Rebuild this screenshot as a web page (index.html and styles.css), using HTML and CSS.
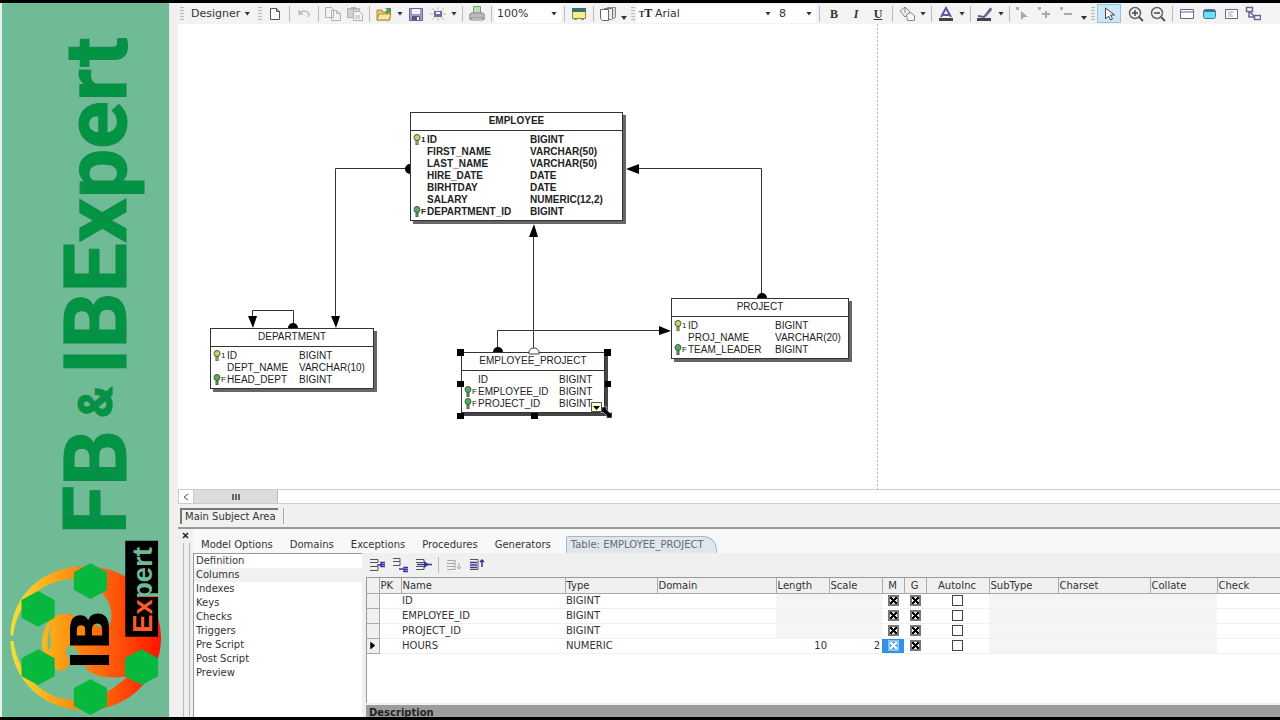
FILE: index.html
```html
<!DOCTYPE html>
<html lang="en">
<head>
<meta charset="utf-8">
<title>FB &amp; IBExpert</title>
<link rel="stylesheet" href="styles.css">
</head>
<body>
<div class="page">
<aside class="brand">
  <h1 class="brand-title">FB<span class="amp"> &amp; </span>IBExpert</h1>
  <svg class="logo" viewBox="6 20 504 541">
    <defs>
      <linearGradient id="flame" gradientUnits="userSpaceOnUse" x1="30" y1="0" x2="486" y2="0">
        <stop offset="0" stop-color="#f2e03a"/><stop offset=".3" stop-color="#fca516"/><stop offset=".6" stop-color="#ff6a0c"/><stop offset="1" stop-color="#ff1402"/>
      </linearGradient>
      <linearGradient id="word" gradientUnits="userSpaceOnUse" x1="0" y1="0" x2="260" y2="0">
        <stop offset=".43" stop-color="#ff5a2c"/><stop offset=".43" stop-color="#6fbb95"/>
      </linearGradient>
    </defs>
    <path fill="url(#flame)" d="M31 314C36 190 130 105 258 105C390 105 486 205 486 322C486 440 390 540 258 540C130 540 36 450 31 331L41 331C52 430 130 510 235 510C300 508 350 470 385 438C330 445 275 440 258 410C245 392 240 365 222 348C208 340 196 352 200 370C206 382 215 392 206 406C195 424 176 424 166 412C150 395 130 375 126 345C126 310 138 275 158 262C185 240 215 250 245 262C280 280 310 296 328 286C345 262 336 205 300 180C270 150 240 143 215 143C130 150 52 210 40 314Z"/>
    <path fill="#6fbb95" d="M160 272C148 295 142 325 144 350L150 362C156 345 152 328 151 310C152 295 156 285 160 272Z"/>
    <g fill="#07b83e">
      <path d="M273 96l50 27v54l-50 27-50-27v-54z"/>
      <path d="M115 180l50 27v54l-50 27-50-27v-54z"/>
      <path d="M115 356l50 27v54l-50 27-50-27v-54z"/>
      <path d="M273 446l50 27v54l-50 27-50-27v-54z"/>
      <path d="M427 356l50 27v54l-50 27-50-27v-54z"/>
    </g>
    <path d="M378 28h99v290h-99z"/>
    <text class="logo-ib" transform="translate(328 418) rotate(-90)">IB</text>
    <text class="logo-expert" fill="url(#word)" transform="translate(460 306) rotate(-90)">Expert</text>
  </svg>
</aside>

<main class="app">
<div class="toolbar">
  <i class="grip"></i>
  <button class="menu">Designer<i class="tri"></i></button>
  <i class="grip"></i>
  <button class="tb" aria-label="New"><svg viewBox="0 0 16 16"><path d="M3.500 2.500h6l3 3v8h-9zM9.500 2.500v3h3" fill="#fff" stroke="#555"/></svg></button>
  <i class="sep"></i>
  <button class="tb faint" aria-label="Undo"><svg viewBox="0 0 16 16"><path d="M3 4v4h4M3 8c3-4 9-4 10 1l-1 2" fill="none" stroke="#999" stroke-width="1.500"/></svg></button>
  <i class="sep"></i>
  <button class="tb faint" aria-label="Copy"><svg viewBox="0 0 16 16"><path d="M.500 1.500h6l2 2v8h-8zM6.500 4.500h5l4 3v7h-9zM11.500 4.500v3h4" fill="#f4f4f4" stroke="#888"/></svg></button>
  <button class="tb faint" aria-label="Paste"><svg viewBox="0 0 16 16"><path d="M.500 2.500h12v9h-12z" fill="#bbb" stroke="#888"/><path d="M4 1h5v3H4z" fill="#888"/><path d="M6.500 5.500h6l3 3v6h-9zM8 10h5M8 12h5" fill="#f4f4f4" stroke="#888"/></svg></button>
  <i class="sep"></i>
  <button class="tb" aria-label="Open"><svg viewBox="0 0 16 16"><path d="M1 14V4h5l1 2h7v8z" fill="#e6c766" stroke="#a98f45"/><path d="M3 8h12l-2 6H1z" fill="#f8e79a" stroke="#a98f45"/><path d="M9 2h6v6l-2-2-2 2-2-2 2-2z" fill="#5a9a50"/></svg></button>
  <button class="drop" aria-label="Open recent"><i class="tri"></i></button>
  <button class="tb" aria-label="Save"><svg viewBox="0 0 16 16"><path d="M1.500 2.500h13v12h-13z" fill="#9b9bd0" stroke="#6767a0"/><path d="M4 3h8v5H4z" fill="#f4f4fb"/><path d="M4 10h8v4H4z" fill="#4f5a78"/><path d="M9 11h2v3H9z" fill="#fff"/></svg></button>
  <button class="tb" aria-label="Export"><svg viewBox="0 0 16 16"><path d="M2 2l3 3M14 2l-3 3M2 14l3-3M14 14l-3-3M8 1v3M8 12v3M0 8h3M13 8h3" stroke="#dcb48a"/><path d="M4 5h8v6H4z" fill="#6d6da8"/><path d="M6 6h4v2H6z" fill="#fff"/></svg></button>
  <button class="drop" aria-label="Export options"><i class="tri"></i></button>
  <i class="sep"></i>
  <button class="tb" aria-label="Print"><svg viewBox="0 0 16 16"><path d="M4.500 .500h7v7h-7z" fill="#b7e0b5" stroke="#789a78"/><path d="M2 7h12l2 3v3H0v-3z" fill="#b9bdb9" stroke="#888"/><path d="M2 12h12v2H2z" fill="#eee" stroke="#888"/></svg></button>
  <i class="sep"></i>
  <span class="pick pick-zoom"><select aria-label="Zoom"><option>100%</option></select><i class="tri"></i></span>
  <i class="sep"></i>
  <button class="tb" aria-label="Table view"><svg viewBox="0 0 16 16"><path d="M1.500 2.500h13v10h-13z" fill="#f6ef8a" stroke="#8b8652"/><path d="M1 2h14v4H1z" fill="#35726f"/><path d="M3 13h3M10 13h3" stroke="#9a8f40" stroke-width="2"/></svg></button>
  <i class="sep"></i>
  <button class="tb" aria-label="Pages"><svg viewBox="0 0 16 16"><path d="M7.500 1.500h8v10l-2 1h-6z" fill="#ddd" stroke="#888"/><path d="M4.500 2.500h8v10l-1 1h-7z" fill="#eee" stroke="#777"/><path d="M.500 3.500h8v11h-6l-2-2z" fill="#fff" stroke="#666"/></svg></button>
  <button class="drop low" aria-label="More"><i class="tri"></i></button>
  <i class="grip"></i>
  <span class="pick pick-font"><b class="tt"><small>T</small>T</b><select aria-label="Font"><option>Arial</option></select><i class="tri"></i></span>
  <span class="pick pick-size"><select aria-label="Font size"><option>8</option></select><i class="tri"></i></span>
  <i class="sep"></i>
  <button class="tb letter">B</button>
  <button class="tb letter italic">I</button>
  <button class="tb letter under">U</button>
  <i class="sep"></i>
  <button class="tb" aria-label="Fill colour"><svg viewBox="0 0 16 16"><path d="M1 5l5-4 5 5-5 5zM6 1v6" fill="#eee" stroke="#888"/><path d="M7.500 8.500l4-2 4 3v5h-7z" fill="#f8f8f8" stroke="#888"/></svg></button>
  <button class="drop" aria-label="Fill options"><i class="tri"></i></button>
  <i class="sep"></i>
  <button class="tb" aria-label="Text colour"><svg viewBox="0 0 16 16"><path d="M3 11L8 2l5 9M5 9h6" fill="none" stroke="#5b5b9c" stroke-width="2"/><path d="M1 12h14v3H1z" fill="#444"/></svg></button>
  <button class="drop" aria-label="Text colour options"><i class="tri"></i></button>
  <i class="sep"></i>
  <button class="tb" aria-label="Line colour"><svg viewBox="0 0 16 16"><path d="M1 10l6 1 7-9" fill="none" stroke="#5b5b9c" stroke-width="2"/><path d="M8 9l6-7 1 2-6 7z" fill="#6d7087"/><path d="M0 12h14v3H0z" fill="#444"/></svg></button>
  <button class="drop" aria-label="Line colour options"><i class="tri"></i></button>
  <i class="sep"></i>
  <button class="tb faint" aria-label="Select point"><svg viewBox="0 0 16 16"><path d="M0 1h3v3H0z" fill="#888"/><path d="M5 5v9l3-3h4z" fill="#777"/></svg></button>
  <button class="tb faint" aria-label="Add point"><svg viewBox="0 0 16 16"><path d="M0 1h3v3H0z" fill="#888"/><path d="M8 5v7M4 8h8" stroke="#777" stroke-width="2"/></svg></button>
  <button class="tb faint" aria-label="Remove point"><svg viewBox="0 0 16 16"><path d="M0 1h3v3H0z" fill="#888"/><path d="M4 8h8" stroke="#777" stroke-width="2"/></svg></button>
  <button class="drop low" aria-label="More"><i class="tri"></i></button>
  <i class="grip"></i>
  <button class="tb on" aria-label="Pointer"><svg viewBox="0 0 16 16"><path d="M4.500 2v11l3-3 2 4 2-1-2-4h4z" fill="#fff" stroke="#444"/></svg></button>
  <button class="tb" aria-label="Zoom in"><svg viewBox="0 0 16 16"><circle cx="7" cy="7" r="5.500" fill="#f2f2f2" stroke="#666" stroke-width="1.500"/><path d="M11 11l4 4" stroke="#555" stroke-width="2"/><path d="M4 7h6M7 4v6" stroke="#444" stroke-width="1.500"/></svg></button>
  <button class="tb" aria-label="Zoom out"><svg viewBox="0 0 16 16"><circle cx="7" cy="7" r="5.500" fill="#f2f2f2" stroke="#666" stroke-width="1.500"/><path d="M11 11l4 4" stroke="#555" stroke-width="2"/><path d="M4 7h6" stroke="#444" stroke-width="1.500"/></svg></button>
  <i class="sep"></i>
  <button class="tb" aria-label="Entity"><svg viewBox="0 0 16 16"><path d="M1.500 3.500h13v9h-13zM1 6h13" fill="#fff" stroke="#66669c"/></svg></button>
  <button class="tb" aria-label="View"><svg viewBox="0 0 16 16"><rect x="2.500" y="3.500" width="12" height="9" rx="2" fill="#63e6f2" stroke="#4e6aa0"/><path d="M3 5h11" stroke="#4e6aa0" stroke-width="2"/></svg></button>
  <button class="tb" aria-label="Comment"><svg viewBox="0 0 16 16"><path d="M2.500 3.500h12v9h-12z" fill="#fff" stroke="#66669c"/><path d="M5 6h6M5 8h4M5 10h5" stroke="#aaa"/></svg></button>
  <button class="tb" aria-label="Relation"><svg viewBox="0 0 16 16"><path d="M1.500 1.500h6v4h-6zM9.500 9.500h6v4h-6zM4 6v5h5M5 6l4 4" fill="#fff" stroke="#66669c" stroke-width="1.500"/></svg></button>
</div>

<section class="canvas">
  <article class="entity employee">
    <h2>EMPLOYEE</h2>
    <table>
      <tr><td class="key gold">1</td><td>ID</td><td>BIGINT</td></tr>
      <tr><td></td><td>FIRST_NAME</td><td>VARCHAR(50)</td></tr>
      <tr><td></td><td>LAST_NAME</td><td>VARCHAR(50)</td></tr>
      <tr><td></td><td>HIRE_DATE</td><td>DATE</td></tr>
      <tr><td></td><td>BIRHTDAY</td><td>DATE</td></tr>
      <tr><td></td><td>SALARY</td><td>NUMERIC(12,2)</td></tr>
      <tr><td class="key">F</td><td>DEPARTMENT_ID</td><td>BIGINT</td></tr>
    </table>
  </article>
  <article class="entity department">
    <h2>DEPARTMENT</h2>
    <table>
      <tr><td class="key gold">1</td><td>ID</td><td>BIGINT</td></tr>
      <tr><td></td><td>DEPT_NAME</td><td>VARCHAR(10)</td></tr>
      <tr><td class="key">F</td><td>HEAD_DEPT</td><td>BIGINT</td></tr>
    </table>
  </article>
  <article class="entity project">
    <h2>PROJECT</h2>
    <table>
      <tr><td class="key gold">1</td><td>ID</td><td>BIGINT</td></tr>
      <tr><td></td><td>PROJ_NAME</td><td>VARCHAR(20)</td></tr>
      <tr><td class="key">F</td><td>TEAM_LEADER</td><td>BIGINT</td></tr>
    </table>
  </article>
  <article class="entity link">
    <h2>EMPLOYEE_PROJECT</h2>
    <table>
      <tr><td></td><td>ID</td><td>BIGINT</td></tr>
      <tr><td class="key">F</td><td>EMPLOYEE_ID</td><td>BIGINT</td></tr>
      <tr><td class="key">F</td><td>PROJECT_ID</td><td>BIGINT</td></tr>
    </table>
  </article>
  <svg class="wires">
    <g transform="translate(-178 -24)">
      <path d="M877.500 24V490" stroke="#bbb" stroke-dasharray="2 2"/>
      <path d="M410 168.500H335.500V320M761.500 298V168.500H635M533.500 348V233M497.500 352V330.500H662M293.500 328V310.500H252.500V320" fill="none" stroke="#333"/>
      <path d="M331 316h9l-4 12zM248 316h9l-4 12zM639 164v10l-13-5zM529 237h9l-4-13zM659 326v9l12-4z"/>
      <path d="M410 164a5 5 0 0 0 0 10zM757 298a5 5 0 0 1 10 0zM493 352a5 5 0 0 1 10 0zM288 328a5 5 0 0 1 10 0z"/>
      <path d="M529 352a5 4 0 0 1 10 0v2h-10z" fill="#fff" stroke="#444"/>
      <path d="M457 349h7v7h-7zM604 349h7v7h-7zM457 381h7v6h-7zM605 381h6v6h-6zM457 413h7v6h-7zM531 413h7v6h-7z"/>
      <path d="M602 407h5l-1 2 4 4 2-1v6h-6l1-2-4-4-2 1z" stroke="#fff" stroke-width=".5"/>
      <path d="M591.500 402.500h10v9h-10z" fill="#ffffd0" stroke="#555"/><path d="M593 406h7l-3.500 4z"/>
    </g>
  </svg>
</section>

<div class="hscroll"><button aria-label="Scroll left"><svg viewBox="0 0 8 8"><path d="M6 1L2 4l4 3" fill="none" stroke="#555"/></svg></button><span class="thumb"><i></i></span></div>
<div class="areas"><button>Main Subject Area</button></div>

<section class="panel">
  <div class="dock"><button aria-label="Close"><svg viewBox="0 0 8 8"><path d="M1 1l5 5M6 1L1 6" stroke="#222" stroke-width="1.500"/></svg></button></div>
  <div class="panel-body">
    <nav class="tabs">
      <button>Model Options</button><button>Domains</button><button>Exceptions</button><button>Procedures</button><button>Generators</button><button class="current">Table: EMPLOYEE_PROJECT</button>
    </nav>
    <div class="split">
      <ul class="pages">
        <li>Definition</li><li class="active">Columns</li><li>Indexes</li><li>Keys</li><li>Checks</li><li>Triggers</li><li>Pre Script</li><li>Post Script</li><li>Preview</li>
      </ul>
      <div class="detail">
        <div class="tools">
          <button class="tb" aria-label="Insert column"><svg viewBox="0 0 16 16"><path d="M0 2.500h8v3H0M0 9.500h8v4H0" fill="none" stroke="#555"/><path d="M7 8h4M15 5.500h-4v4h4M11 7.500h4" fill="none" stroke="#3434a0" stroke-width="1.500"/></svg></button>
          <button class="tb" aria-label="Add column"><svg viewBox="0 0 16 16"><path d="M0 1.500h7v3H0M0 8.500h7v-4" fill="none" stroke="#555"/><path d="M6 12h4M15 10.500h-4v4h4M11 12.500h4" fill="none" stroke="#3434a0" stroke-width="1.500"/></svg></button>
          <button class="tb" aria-label="Delete column"><svg viewBox="0 0 16 16"><path d="M0 2.500h8v3H0M0 9.500h8v3H0" fill="none" stroke="#555"/><path d="M1 7.500h15" stroke="#3434a0" stroke-width="1.500"/><path d="M8 4l5 3.500L8 11z" fill="#3434a0"/></svg></button>
          <i class="sep"></i>
          <button class="tb faint" aria-label="Move down"><svg viewBox="0 0 16 16"><path d="M1 3.500h8M1 6.500h8M1 9.500h8M1 12.500h8M9 3v10M13 6v6M11 10l2 2 2-2" fill="none" stroke="#777"/></svg></button>
          <button class="tb" aria-label="Move up"><svg viewBox="0 0 16 16"><path d="M1 2.500h8v10H1" fill="none" stroke="#555"/><path d="M1 5.500h7M1 8h7M1 10.500h7M13 10V3M11 5l2-2 2 2" fill="none" stroke="#3434a0" stroke-width="1.500"/></svg></button>
        </div>
        <div class="grid-wrap">
        <table class="grid">
          <colgroup><col class="c12"><col class="c22"><col class="c164"><col class="c92"><col class="c119"><col class="c53"><col class="c53"><col class="c22"><col class="c22"><col class="c63"><col class="c69"><col class="c92"><col class="c67"><col></colgroup>
          <thead><tr><th></th><th>PK</th><th>Name</th><th>Type</th><th>Domain</th><th>Length</th><th>Scale</th><th class="mid">M</th><th class="mid">G</th><th class="mid">AutoInc</th><th>SubType</th><th>Charset</th><th>Collate</th><th>Check</th></tr></thead>
          <tbody>
          <tr><th></th><td></td><td>ID</td><td>BIGINT</td><td></td><td class="off"></td><td class="off"></td><td class="mid"><input type="checkbox" aria-label="M" checked></td><td class="mid"><input type="checkbox" aria-label="G" checked></td><td class="mid"><input type="checkbox" aria-label="AutoInc"></td><td class="off"></td><td class="off"></td><td class="off"></td><td></td></tr>
          <tr><th></th><td></td><td>EMPLOYEE_ID</td><td>BIGINT</td><td></td><td class="off"></td><td class="off"></td><td class="mid"><input type="checkbox" aria-label="M" checked></td><td class="mid"><input type="checkbox" aria-label="G" checked></td><td class="mid"><input type="checkbox" aria-label="AutoInc"></td><td class="off"></td><td class="off"></td><td class="off"></td><td></td></tr>
          <tr><th></th><td></td><td>PROJECT_ID</td><td>BIGINT</td><td></td><td class="off"></td><td class="off"></td><td class="mid"><input type="checkbox" aria-label="M" checked></td><td class="mid"><input type="checkbox" aria-label="G" checked></td><td class="mid"><input type="checkbox" aria-label="AutoInc"></td><td class="off"></td><td class="off"></td><td class="off"></td><td></td></tr>
          <tr><th><i class="mark"></i></th><td></td><td>HOURS</td><td>NUMERIC</td><td></td><td class="num">10</td><td class="num">2</td><td class="mid focus"><input type="checkbox" aria-label="M" checked></td><td class="mid"><input type="checkbox" aria-label="G" checked></td><td class="mid"><input type="checkbox" aria-label="AutoInc"></td><td class="off"></td><td class="off"></td><td class="off"></td><td></td></tr>
          </tbody>
        </table>
        </div>
        <div class="desc">Description</div>
      </div>
    </div>
  </div>
</section>
</main>
</div>
<script src="keys.js"></script>
</body>
</html>
```

FILE: keys.js
```js
// Puts a key glyph in front of the 1/F index mark of each key column.
document.querySelectorAll(".key").forEach(function (cell) {
  var mark = cell.textContent;
  var fill = cell.classList.contains("gold") ? "#d3cf62" : "#4fae5c";
  cell.innerHTML =
    '<svg viewBox="0 0 8 11"><path d="M3 6v5h2V6" fill="' + fill + '" stroke="#555"/>' +
    '<circle cx="4" cy="3.500" r="3" fill="' + fill + '" stroke="#4b5a3c"/></svg><small>' + mark + "</small>";
});
```

FILE: styles.css
```css
* { box-sizing: border-box; }
body {
  margin: 0;
  background: #000;
  color: #333;
  font: 10px/14px "DejaVu Sans", Verdana, sans-serif;
}
button, select, input { font: inherit; color: inherit; margin: 0; }
button { background: none; border: 0; padding: 0; }
i { font-style: normal; }

.page {
  display: flex;
  height: 100vh;
  border-top: 3px solid #000;
  border-bottom: 3px solid #000;
  background: #f0f0f0;
  overflow: hidden;
}

/* Brand strip */
.brand {
  flex: none;
  width: 170px;
  display: flex;
  flex-direction: column;
  justify-content: space-between;
  background: #6fbb95;
  border-left: 2px solid #e4f3ea;
  border-right: 1px solid #dcefe4;
}
.brand-title {
  margin: 34px 0 0 46px;
  writing-mode: vertical-rl;
  transform: rotate(180deg);
  align-self: flex-start;
  white-space: pre;
  font: bold 88px/96px Roboto, sans-serif;
  color: #009444;
  -webkit-text-stroke: 1px #118a48;
}
.amp { font-size: 48px; }
.logo { display: block; width: 100%; flex: none; }
.logo-ib { font: bold 160px "DejaVu Sans", sans-serif; }
.logo-expert { font: bold 83px "Liberation Sans", Arial, sans-serif; }

.app {
  flex: 1;
  min-width: 0;
  display: flex;
  flex-direction: column;
  margin-left: 8px;
}

/* Toolbar */
.toolbar { flex: none; display: flex; align-items: center; height: 21px; background: #f3f3f3; }
.toolbar > * { flex: none; }
.grip { width: 4px; height: 14px; margin: 0 2px; background: repeating-linear-gradient(#bbb 0 1px, #eee 1px 3px); }
.menu { display: flex; align-items: center; gap: 4px; width: 70px; padding-left: 5px; font-size: 11px; }
.tri { width: 6px; height: 4px; background: #333; clip-path: polygon(0 0, 100% 0, 50% 100%); }
.tb { width: 22px; height: 19px; display: flex; align-items: center; justify-content: center; }
.tb svg { width: 16px; height: 16px; }
.faint { opacity: .6; }
.on { background: #cfe6f7; border: 1px solid #8fc3ea; width: 24px; margin-right: 4px; }
.drop { width: 10px; height: 19px; display: flex; align-items: center; justify-content: center; }
.low { align-items: flex-end; padding-bottom: 3px; }
.sep { width: 1px; height: 16px; margin: 0 3px; background: #bbb; }
.pick { display: flex; align-items: center; height: 18px; background: #fff; padding: 0 4px 0 2px; }
.pick select { flex: 1; min-width: 0; border: 0; background: none; appearance: none; padding: 0; font-size: 11px; }
.pick-zoom { width: 66px; }
.pick-font { width: 138px; }
.pick-size { width: 41px; padding-left: 4px; }
.tt { width: 16px; font: bold 12px/14px "Liberation Serif", serif; color: #222; white-space: nowrap; }
.tt small { font-size: 8px; }
.letter { font: bold 12px/16px "Liberation Serif", serif; }
.italic { font-style: italic; }
.under { text-decoration: underline; }

/* Diagram */
.canvas { flex: 1; position: relative; min-height: 0; background: #fff; overflow: hidden; }
.wires { position: absolute; inset: 0; width: 100%; height: 100%; pointer-events: none; }
.entity {
  position: absolute;
  background: #fff;
  border: 1px solid #333;
  box-shadow: 3px 3px 0 #666;
  padding-bottom: 2px;
  font: 10px/12px "Liberation Sans", Arial, sans-serif;
  color: #222;
}
.entity h2 { margin: 0 0 3px; padding-bottom: 2px; font: inherit; line-height: 15px; text-align: center; border-bottom: 1px solid #333; }
.entity table { border-collapse: collapse; table-layout: fixed; width: 100%; }
.entity td { padding: 0; height: 12px; white-space: nowrap; }
.entity td:first-child { width: 16px; }
.entity .key { padding-left: 2px; line-height: 0; }
.key svg { width: 8px; height: 11px; vertical-align: top; }
.key small { font-size: 8px; line-height: 12px; }
.employee { left: 232px; top: 88px; width: 213px; font-weight: bold; }
.employee td:nth-child(2) { width: 103px; }
.department { left: 32px; top: 304px; width: 164px; }
.department td:nth-child(2) { width: 72px; }
.project { left: 493px; top: 274px; width: 178px; }
.project td:nth-child(2) { width: 87px; }
.link { left: 283px; top: 328px; width: 144px; box-shadow: 2px 2px 0 1px #444; }
.link td:nth-child(2) { width: 81px; }

/* Scrollbar and subject areas */
.hscroll { flex: none; display: flex; height: 15px; background: #fff; border: 1px solid #ccc; border-width: 1px 0; }
.hscroll button { width: 16px; display: flex; align-items: center; justify-content: center; border: 1px solid #ccc; border-width: 0 1px; }
.hscroll svg { width: 8px; height: 8px; }
.thumb { width: 84px; display: flex; align-items: center; justify-content: center; background: #dcdcdc; border-right: 1px solid #bbb; }
.thumb i { width: 8px; height: 6px; background: repeating-linear-gradient(90deg, #666 0 2px, #dcdcdc 2px 3px); }
.areas { flex: none; height: 25px; padding: 4px 2px 3px; border-bottom: 2px solid #999; display: flex; }
.areas button { width: 98px; white-space: nowrap; border: 1px solid #777; border-width: 2px 0 0 2px; padding-left: 3px; text-align: left; }
.areas::after { content: ""; width: 1px; margin-left: 5px; background: #aaa; }

/* Bottom panel */
.panel { flex: none; display: flex; height: 188px; }
.dock { width: 15px; padding: 3px 3px 0 4px; display: flex; flex-direction: column; align-items: center; gap: 3px; }
.dock svg { display: block; width: 8px; height: 8px; }
.dock::after { content: ""; flex: 1; width: 5px; border: 1px solid #bbb; border-width: 0 1px; }
.panel-body { flex: 1; min-width: 0; display: flex; flex-direction: column; }
.tabs { display: flex; align-items: flex-end; height: 24px; padding: 0 0 0 8px; gap: 17px; background: #f8f8f8; }
.tabs button { height: 17px; padding-top: 1px; white-space: nowrap; }
.tabs .current {
  margin-left: -2px;
  padding: 0 12px 0 4px;
  color: #6c6c74;
  background: #dfe6ec;
  border: 1px solid #a9b7c2;
  border-bottom: 0;
  border-radius: 2px 14px 0 0;
}
.split { flex: 1; min-height: 0; display: flex; gap: 4px; }
.pages { flex: none; width: 169px; margin: 0; padding: 0; list-style: none; background: #fff; border: 1px solid #999; border-width: 1px 0 0 1px; }
.pages li { padding-left: 2px; }
.pages .active { background: #f1f1f1; }
.detail { flex: 1; min-width: 0; display: flex; flex-direction: column; }
.tools { flex: none; display: flex; align-items: center; height: 24px; }
.tools .tb { width: 23px; }
.grid-wrap { flex: 1; background: #fff; border: 1px solid #999; border-width: 1px 0 0 1px; }
.grid { width: 100%; border-collapse: collapse; table-layout: fixed; }
.grid th, .grid td { height: 15px; padding: 0 2px 0 1px; line-height: 12px; font-weight: normal; text-align: left; white-space: nowrap; overflow: hidden; }
.grid td { border-bottom: 1px solid #f0f0f0; }
.grid th { background: #f0f0f0; border-right: 1px solid #aaa; border-bottom: 1px solid #aaa; }
.grid thead th { padding-top: 2px; }
.grid th:last-child:not(:first-child) { border-right: 0; }
.grid tbody th { padding: 0; }
.grid .off { background: #f5f5f5; }
.grid td.mid { text-align: center; padding: 0; }
.grid th.mid { text-align: center; }
.grid .num { text-align: right; }
.grid .focus { background: #3390e8; }
.grid input {
  appearance: none;
  display: block;
  width: 11px;
  height: 11px;
  margin: 0 auto;
  border: 1px solid #444;
  background: #fff;
}
.grid input:checked {
  border-width: 2px;
  border-color: #777;
  background:
    linear-gradient(45deg, transparent 40%, #000 40% 60%, transparent 60%),
    linear-gradient(-45deg, #eee 40%, #000 40% 60%, #eee 60%);
}
.grid .focus input:checked {
  border-color: #8cc4f5;
  background:
    linear-gradient(45deg, transparent 40%, #fff 40% 60%, transparent 60%),
    linear-gradient(-45deg, #58a8ee 40%, #fff 40% 60%, #58a8ee 60%);
}
.mark { display: block; width: 5px; height: 8px; margin: 0 auto; background: #000; clip-path: polygon(0 0, 100% 50%, 0 100%); }
.c12 { width: 12px; } .c22 { width: 22px; } .c53 { width: 53px; } .c63 { width: 63px; } .c67 { width: 67px; }
.c69 { width: 69px; } .c92 { width: 92px; } .c119 { width: 119px; } .c164 { width: 164px; }
.desc { flex: none; height: 12px; margin-top: 2px; padding-left: 3px; background: #9c9c9c; color: #222; font-weight: bold; line-height: 15px; overflow: hidden; }
```
